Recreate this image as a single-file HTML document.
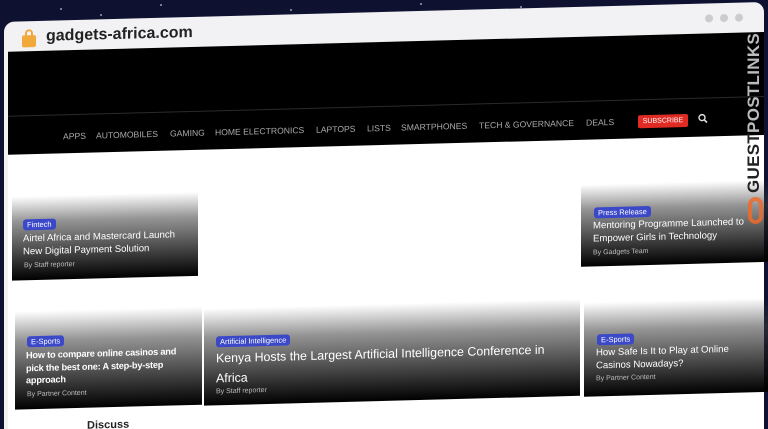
<!DOCTYPE html>
<html><head><meta charset="utf-8"><style>
*{margin:0;padding:0;box-sizing:border-box}
html{width:768px;height:429px;overflow:hidden}
body{width:768px;height:429px;overflow:hidden;background:#0e1230;font-family:"Liberation Sans",sans-serif;position:relative}
.star{position:absolute;width:2px;height:2px;background:#fff;opacity:.6;border-radius:50%}
#w{position:absolute;left:0;top:0;width:768px;height:429px;transform:skewY(-1.5deg);transform-origin:0 0}
.abs{position:absolute}
.frame{left:4px;top:22px;width:760px;height:430px;background:#f2f2f4;border-radius:10px 10px 0 0}
.page{left:8px;top:52px;width:756px;height:400px;background:#fff}
.hdr{left:8px;top:52px;width:756px;height:103px;background:#000}
.div{left:8px;top:116px;width:756px;height:1px;background:#2a2a2a}
.nav{top:133px;font-size:8.6px;color:#aaa;white-space:nowrap}
.card{background:linear-gradient(to bottom,rgba(0,0,0,0) 0%,rgba(60,60,60,.55) 30%,#000 100%)}
.lab{position:absolute;background:#3b48c8;color:#fff;font-size:7.5px;padding:1px 4px;border-radius:3px;white-space:nowrap}
.t{position:absolute;color:#fff;font-size:9.6px;line-height:12.5px}
.by{position:absolute;color:#bbb;font-size:7px;white-space:nowrap}
</style></head><body>
<div class="star" style="left:60px;top:8px"></div><div class="star" style="left:160px;top:4px"></div>
<div class="star" style="left:290px;top:9px"></div><div class="star" style="left:420px;top:3px"></div>
<div class="star" style="left:520px;top:6px"></div><div class="star" style="left:100px;top:14px"></div>
<div id="w">
<div class="abs frame"></div>
<div class="abs" style="left:22px;top:36px;width:14px;height:12px;background:#f2a93b;border-radius:2px"></div>
<div class="abs" style="left:25px;top:30px;width:8px;height:9px;border:2px solid #f2a93b;border-bottom:none;border-radius:4px 4px 0 0"></div>
<div class="abs" style="left:46px;top:29px;font-size:16px;font-weight:bold;color:#222">gadgets-africa.com</div>
<div class="abs" style="left:705px;top:33px;width:8px;height:8px;border-radius:50%;background:#ccc"></div>
<div class="abs" style="left:720px;top:33px;width:8px;height:8px;border-radius:50%;background:#ccc"></div>
<div class="abs" style="left:735px;top:33px;width:8px;height:8px;border-radius:50%;background:#ccc"></div>
<div class="abs page"></div>
<div class="abs hdr"></div>
<div class="abs div"></div>
<div class="abs nav" style="left:63px">APPS</div>
<div class="abs nav" style="left:96px">AUTOMOBILES</div>
<div class="abs nav" style="left:170px">GAMING</div>
<div class="abs nav" style="left:215px">HOME ELECTRONICS</div>
<div class="abs nav" style="left:316px">LAPTOPS</div>
<div class="abs nav" style="left:367px">LISTS</div>
<div class="abs nav" style="left:401px">SMARTPHONES</div>
<div class="abs nav" style="left:479px">TECH &amp; GOVERNANCE</div>
<div class="abs nav" style="left:586px">DEALS</div>
<div class="abs" style="left:638px;top:132px;width:50px;height:13px;background:#e02a24;color:#fff;font-size:7px;text-align:center;line-height:13px;border-radius:2px">SUBSCRIBE</div>
<svg class="abs" style="left:698px;top:132px" width="10" height="10" viewBox="0 0 10 10"><circle cx="4" cy="4" r="3" fill="none" stroke="#ddd" stroke-width="1.4"/><path d="M6 6L9 9" stroke="#ddd" stroke-width="1.6"/></svg>

<div class="abs card" style="left:12px;top:197px;width:186px;height:84px">
 <div class="lab" style="left:11px;top:23px">Fintech</div>
 <div class="t" style="left:11px;top:37px;width:162px">Airtel Africa and Mastercard Launch New Digital Payment Solution</div>
 <div class="by" style="left:12px;top:66px">By Staff reporter</div>
</div>
<div class="abs card" style="left:581px;top:200px;width:187px;height:82px">
 <div class="lab" style="left:13px;top:23px">Press Release</div>
 <div class="t" style="left:12px;top:36px;width:160px">Mentoring Programme Launched to Empower Girls in Technology</div>
 <div class="by" style="left:12px;top:65px">By Gadgets Team</div>
</div>
<div class="abs card" style="left:15px;top:312px;width:187px;height:98px">
 <div class="lab" style="left:12px;top:25px">E-Sports</div>
 <div class="t" style="left:11px;top:38px;width:168px;font-weight:bold;font-size:9.2px;letter-spacing:-.2px">How to compare online casinos and pick the best one: A step-by-step approach</div>
 <div class="by" style="left:12px;top:80px">By Partner Content</div>
</div>
<div class="abs card" style="left:204px;top:314px;width:376px;height:97px">
 <div class="lab" style="left:12px;top:28px">Artificial Intelligence</div>
 <div class="t" style="left:12px;top:40px;width:360px;font-size:12.4px;line-height:20px">Kenya Hosts the Largest Artificial Intelligence Conference in Africa</div>
 <div class="by" style="left:12px;top:80px">By Staff reporter</div>
</div>
<div class="abs card" style="left:584px;top:318px;width:184px;height:94px">
 <div class="lab" style="left:13px;top:32px">E-Sports</div>
 <div class="t" style="left:12px;top:45px;width:150px">How Safe Is It to Play at Online Casinos Nowadays?</div>
 <div class="by" style="left:12px;top:73px">By Partner Content</div>
</div>
<div class="abs" style="left:87px;top:422px;font-size:11px;font-weight:bold;color:#222">Discuss</div>
</div>
<div class="abs" style="left:744px;top:193px;transform:rotate(-90deg);transform-origin:0 0;font-size:17px;font-weight:bold;white-space:nowrap;letter-spacing:.3px;line-height:19px"><span style="color:#222">GUEST</span><span style="color:#bbb">POSTLINKS</span></div>
<div class="abs" style="left:748px;top:197px;width:15px;height:27px;border:4px solid #f06a2a;border-radius:8px;opacity:.85"></div>
</body></html>
